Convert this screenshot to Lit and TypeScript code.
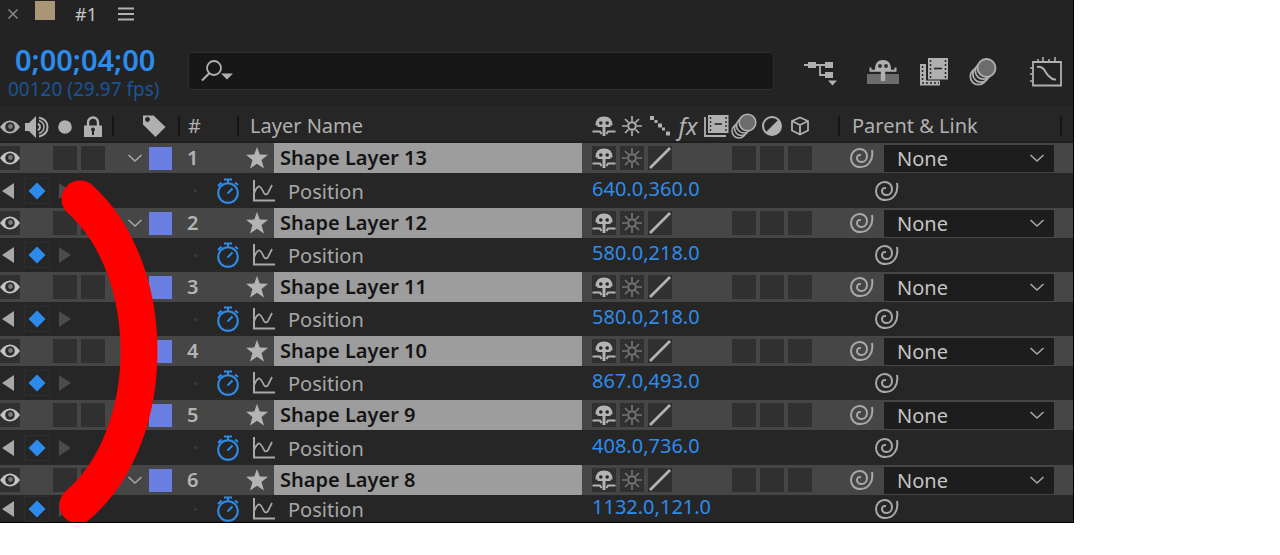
import { LitElement, html, svg, css } from "lit";
import { customElement, property } from "lit/decorators.js";

interface Layer {
  index: number;
  name: string;
  x: string;
  y: string;
}

const LAYERS: Layer[] = [
  { index: 1, name: "Shape Layer 13", x: "640.0", y: "360.0" },
  { index: 2, name: "Shape Layer 12", x: "580.0", y: "218.0" },
  { index: 3, name: "Shape Layer 11", x: "580.0", y: "218.0" },
  { index: 4, name: "Shape Layer 10", x: "867.0", y: "493.0" },
  { index: 5, name: "Shape Layer 9", x: "408.0", y: "736.0" },
  { index: 6, name: "Shape Layer 8", x: "1132.0", y: "121.0" },
];

const icon = (w: number, h: number, body: unknown) =>
  html`<svg width=${w} height=${h} viewBox="0 0 ${w} ${h}" fill="none" stroke="currentColor" aria-hidden="true">${body}</svg>`;

const eye = () => icon(20, 16, svg`
  <path d="M0 8Q4.500 1.500 10 1.500T20 8Q15.500 14.500 10 14.500T0 8Z" fill="currentColor" stroke="none"/>
  <circle cx="10" cy="8" r="4.800" fill="#2c2c2c" stroke="none"/>
  <circle cx="10.500" cy="7.500" r="2.400" fill="#7a7a7a" stroke="none"/>`);
const speaker = () => icon(24, 22, svg`
  <path d="M0 7h4L11 0v22L4 15H0Z" fill="currentColor" stroke="none"/>
  <path d="M13 7.500q4 3.500 0 7M14 1.500q8.500 2 8.500 9.500T14 20.500" stroke-width="2"/>
  <path d="M14 4.500q5 2 5 6.500t-5 6.500" stroke-width="1.500"/>`);
const dot = () => icon(14, 14, svg`<circle cx="7" cy="7" r="6.800" fill="currentColor" stroke="none"/>`);
const lock = () => icon(20, 22, svg`
  <path d="M5 10V6.500a5 5 0 0 1 10 0V10" stroke-width="2.400"/>
  <path d="M1 9.500h18V21H1Z" fill="currentColor" stroke="none"/>
  <circle cx="10" cy="13.500" r="2" fill="#262626" stroke="none"/><path d="M10 14v5" stroke="#262626" stroke-width="2"/>`);
const tag = () => icon(24, 24, svg`
  <path d="M1 1.500H11.500L23.500 13 13.500 23 1 10.500Z" fill="currentColor" stroke="none"/>
  <circle cx="5.500" cy="5.500" r="2.400" fill="#262626" stroke="none"/>`);
const star = () => icon(22, 22, svg`
  <path d="M11 0l2.800 7.600 8.200.2-6.500 5.200 2.500 8.500L11 16.800 4 21.500l2.500-8.500L0 7.800l8.200-.2Z" fill="currentColor" stroke="none"/>`);
const shy = () => icon(24, 20, svg`
  <path d="M3.500 9.500Q3.500 .5 12 .5t8.500 9H18.500V11H5.500V9.500Z" fill="currentColor" stroke="none"/>
  <path d="M.5 15.500H8L9.500 18M23.500 15.500H16L14.500 18" stroke-width="2"/>
  <path d="M10.500 9h3v11h-3Z" fill="currentColor" stroke="none"/>
  <circle cx="8.800" cy="7" r="1.800" fill="#262626" stroke="none"/><circle cx="15.200" cy="7" r="1.800" fill="#262626" stroke="none"/>`);
const sun = () => icon(20, 20, svg`
  <circle cx="10" cy="10" r="3.800" stroke-width="2"/>
  <path d="M10 0v5M10 15v5M0 10h5M15 10h5M3 3l3.500 3.500M13.500 13.500L17 17M17 3l-3.500 3.500M6.500 13.500L3 17" stroke-width="1.700"/>`);
const dots = () => icon(22, 22, svg`
  <path d="M1 1h4v4H1ZM5.500 5h3v3h-3ZM9 8.500h4v4H9ZM13 12.500h3v3h-3ZM17 16.500h4v4h-4Z" fill="currentColor" stroke="none"/>`);
const slash = () => icon(22, 22, svg`<path d="M1 21L21 1" stroke-width="2.600"/>`);
const film = () => icon(26, 24, svg`
  <path d="M2 3v19h21" stroke-width="1.800"/>
  <path d="M5 1h20.500v18H5Z" fill="currentColor" stroke="none"/>
  <path d="M7.500 3v14M23 3v14" stroke="#303030" stroke-width="1.500" stroke-dasharray="2 2"/>
  <path d="M11.500 10h7.500" stroke="#262626" stroke-width="1.600"/>`);
const blur = () => icon(26, 26, svg`
  <circle cx="8" cy="18" r="7" fill="#262626" stroke-width="1.600"/>
  <circle cx="10.500" cy="15.500" r="7" fill="#262626" stroke-width="1.600"/>
  <circle cx="13" cy="12.500" r="7.500" fill="#262626" stroke-width="1.600"/>
  <circle cx="16.500" cy="9.500" r="8.300" fill="#6c6c6c" stroke-width="1.600"/>`);
const half = () => icon(20, 20, svg`
  <circle cx="10" cy="10" r="9" stroke-width="2"/>
  <path d="M16.500 3.500A9.200 9.200 0 0 1 3.500 16.500Z" fill="currentColor" stroke="none"/>`);
const cube = () => icon(20, 20, svg`
  <path d="M10 1.500l8 3.500v9.500l-8 4-8-4V5ZM2 5l8 4 8-4M10 9v9" stroke-width="1.800"/>`);
const chevron = () => icon(16, 10, svg`<path d="M1.500 2L8 8l6.500-6" stroke-width="1.600"/>`);
const spiral = () => icon(24, 22, svg`
  <path d="M22 3C23.800 13 18 20 10.500 20 4.500 20 1 16 1 11.300 1 5.500 5 2 9.700 2c4.300 0 7.300 3 7.300 7 0 3.800-2.500 6-5.500 6C8.500 15 7 13 7 11c0-2 1.500-3.500 4-3" stroke-width="2"/>`);
const left = () => icon(12, 16, svg`<path d="M12 0v16L0 8Z" fill="currentColor" stroke="none"/>`);
const right = () => icon(12, 16, svg`<path d="M0 0v16L12 8Z" fill="currentColor" stroke="none"/>`);
const diamond = () => icon(18, 18, svg`<path d="M9 .5L17.500 9 9 17.500.5 9Z" fill="currentColor" stroke="none"/>`);
const stopwatch = () => icon(24, 26, svg`
  <circle cx="12" cy="15" r="9.800" stroke-width="2"/>
  <path d="M8 1.500h8M12 1.500v4M11.500 15.500l5-5M2 8l3.500-3.500M19 4.500L22 7" stroke-width="2"/>`);
const graph = () => icon(24, 24, svg`
  <path d="M2 1v20.500h21" stroke-width="2"/>
  <path d="M2 14.500Q5 7 7.500 7.500 9 8 12 14q2 3 4 0L20 6" stroke-width="1.700"/>`);
const close = () => icon(12, 12, svg`<path d="M1.500 1.500l9 9M10.500 1.500l-9 9" stroke-width="1.600"/>`);
const menu = () => icon(16, 16, svg`<path d="M0 2.500h16M0 8h16M0 13.500h16" stroke-width="1.800"/>`);
const magnifier = () => icon(32, 24, svg`
  <circle cx="13" cy="9" r="7" stroke-width="1.800"/><path d="M8.500 14L1 21.500" stroke-width="2.200"/>
  <path d="M20 14.500h12l-6 6Z" fill="currentColor" stroke="none"/>`);
const flowchart = () => icon(34, 28, svg`
  <path d="M0 7h29M16 7v10h8" stroke-width="1.800"/>
  <path d="M4 4h8v6H4ZM21 4h8v6h-8ZM21 14h8v6h-8ZM24 22.500h9l-4.500 5Z" fill="currentColor" stroke="none"/>`);
const shyLarge = () => icon(32, 26, svg`
  <path d="M0 15h32v10H0Z" fill="#6c6c6c" stroke="none"/>
  <path d="M8 10Q8 1 16 1t8 9v2H8Z" fill="currentColor" stroke="none"/>
  <path d="M3.500 8.500v3.200h25V8.500" stroke-width="2"/>
  <circle cx="13" cy="7" r="2" fill="#333" stroke="none"/><circle cx="19" cy="7" r="2" fill="#333" stroke="none"/>
  <path d="M13.800 11h4.400v11h-4.400Z" fill="currentColor" stroke="none"/>`);
const filmLarge = () => icon(28, 28, svg`
  <path d="M0 6h6v16.500h14v5H0Z" fill="currentColor" stroke="none"/>
  <path d="M2.500 8v16M2 25h17" stroke="#262626" stroke-width="1.500" stroke-dasharray="2 2"/>
  <path d="M8 0h20v21.500H8Z" fill="currentColor" stroke="none"/>
  <path d="M10.500 2v18M25.500 2v18" stroke="#262626" stroke-width="1.500" stroke-dasharray="2 2"/>
  <path d="M14 10.500h8" stroke="#262626" stroke-width="1.600"/>`);
const blurLarge = () => icon(28, 28, svg`
  <circle cx="9.500" cy="18.500" r="8.200" fill="#262626" stroke-width="1.800"/>
  <circle cx="12" cy="16" r="8.200" fill="#262626" stroke-width="1.800"/>
  <circle cx="14.500" cy="13" r="8.200" fill="#262626" stroke-width="1.800"/>
  <circle cx="17.500" cy="10" r="9" fill="#6c6c6c" stroke-width="1.800"/>`);
const graphEditor = () => icon(32, 30, svg`
  <path d="M3 5h28v23.500H3Z" stroke-width="1.800"/>
  <path d="M8 5V2M13 5V0M19 5V2M25 5V0M3 11H0M3 17H0M3 24H0" stroke-width="1.600"/>
  <path d="M7 10Q12 9 15 14t5 6q2.500 3 6 2.500" stroke-width="2"/>`);

const shared = css`
  * { box-sizing: border-box; }
  svg { display: block; flex: none; }
  button {
    display: inline-flex; align-items: center; justify-content: center;
    margin: 0; padding: 0; border: 0; background: none; color: inherit; font: inherit;
  }
  .columns {
    display: grid;
    grid-template-columns: 112px 66px 59px minmax(0, 1fr) 256px 235px;
  }
  .features { display: grid; grid-template-columns: 21px 24px 24px 24px; column-gap: 4px; align-items: center; justify-items: center; }
  .features > :first-child { justify-self: start; }
  .switches { display: grid; grid-template-columns: repeat(8, 24px); column-gap: 4px; padding-left: 10px; align-items: center; justify-items: center; }
`;

@customElement("layer-group")
class LayerGroup extends LitElement {
  @property({ attribute: false }) layer!: Layer;

  static styles = [shared, css`
    :host { display: grid; grid-template-rows: 30px 1fr; }
    .layer { background: #464646; align-items: center; }
    .layer .features, .layer .switches { height: 24px; }
    .cell { width: 24px; height: 24px; background: #303030; color: #b4b4b4; }
    .visible { width: 20px; color: #c4c4c4; }
    .dim { color: #747474; }
    .label { display: flex; align-items: center; justify-content: flex-end; gap: 6px; padding-right: 6px; color: #a8a8a8; }
    .swatch { width: 23px; height: 23px; background: #6b7fe2; }
    .index { padding-left: 9px; font-weight: 600; color: #b4b4b4; }
    .name { display: flex; align-items: center; align-self: stretch; gap: 6px; padding-left: 9px; color: #b4b4b4; }
    .name-box { flex: 1; align-self: stretch; padding-left: 6px; background: #9d9d9d; color: #141414; font-weight: 600; line-height: 30px; white-space: nowrap; overflow: hidden; }
    .parent { display: flex; align-items: center; gap: 10px; padding: 0 19px 0 12px; color: #a8a8a8; }
    .picker { flex: 1; display: grid; align-items: center; background: #1d1d1d; }
    .picker > * { grid-area: 1 / 1; }
    .picker svg { justify-self: end; margin-right: 9px; pointer-events: none; }
    select { appearance: none; width: 100%; height: 27px; margin: 0; padding: 0 13px; border: 0; border-radius: 0; background: none; color: #c4c4c4; font: inherit; }
    .property { align-items: center; background: #262626; color: #a8a8a8; }
    .previous { padding-left: 2px; }
    .key { width: 24px; height: 24px; outline: 1px solid #2e2e2e; color: #2d8ceb; }
    .faded { color: #4b4b4b; }
    .title { grid-column: 3 / span 2; display: flex; align-items: center; gap: 12px; padding-left: 16px; }
    .dot { width: 3px; height: 3px; border-radius: 50%; background: #3c3c3c; }
    .watch { margin-left: 7px; color: #2d8ceb; }
    .title-text { padding-top: 2px; line-height: 24px; }
    .value { display: flex; padding: 0 0 4px 10px; line-height: 24px; color: #2d8ceb; white-space: nowrap; }
    .link { display: flex; padding-left: 37px; }
  `];

  render() {
    const l = this.layer;
    return html`
      <div class="columns layer" role="row">
        <div class="features">
          <button class="cell visible" aria-label="Toggle visibility">${eye()}</button>
          <span></span>
          <button class="cell" aria-label="Solo"></button>
          <button class="cell" aria-label="Lock"></button>
        </div>
        <div class="label">
          <button aria-label="Collapse layer">${chevron()}</button>
          <button class="swatch" aria-label="Label colour"></button>
        </div>
        <div class="index">${l.index}</div>
        <div class="name">${star()}<span class="name-box">${l.name}</span></div>
        <div class="switches">
          <button class="cell" aria-label="Shy">${shy()}</button>
          <button class="cell dim" aria-label="Collapse transformations">${sun()}</button>
          <button class="cell" aria-label="Quality">${slash()}</button>
          <span></span><span></span>
          <button class="cell" aria-label="Motion blur"></button>
          <button class="cell" aria-label="Adjustment layer"></button>
          <button class="cell" aria-label="3D layer"></button>
        </div>
        <div class="parent">
          <button aria-label="Parent pick whip">${spiral()}</button>
          <span class="picker">
            <select aria-label="Parent of ${l.name}"><option>None</option></select>
            ${chevron()}
          </span>
        </div>
      </div>
      <div class="columns property" role="row">
        <div class="features">
          <button class="previous" aria-label="Previous keyframe">${left()}</button>
          <button class="key" aria-label="Remove keyframe">${diamond()}</button>
          <button class="faded" aria-label="Next keyframe">${right()}</button>
        </div>
        <div class="title">
          <span class="dot"></span>
          <button class="watch" aria-label="Toggle animation">${stopwatch()}</button>
          <button aria-label="Include in graph editor">${graph()}</button>
          <span class="title-text">Position</span>
        </div>
        <div class="value"><button aria-label="Position X">${l.x}</button>,<button aria-label="Position Y">${l.y}</button></div>
        <div class="link"><button aria-label="Property pick whip">${spiral()}</button></div>
      </div>`;
  }
}

@customElement("app-root")
class AppRoot extends LitElement {
  static styles = [shared, css`
    :host { display: block; min-height: 100vh; background: #fff; font: 20px/28px "Noto Sans", "Open Sans", sans-serif; }
    .panel { position: relative; margin-right: 206px; background: #262626; border: solid #000; border-width: 0 1px 1px 0; color: #b0b0b0; overflow: hidden; }
    .tab { display: flex; align-items: center; height: 28px; padding-left: 7px; background: #232323; }
    .tab-swatch { width: 20px; height: 19px; margin: 0 20px 8px 16px; background: #a89676; }
    .tab-name { margin-right: 21px; font-size: 18px; color: #c4c4c4; }
    .dimmed { color: #858585; }
    .toolbar { display: flex; align-items: center; height: 78px; padding: 0 11px 0 8px; background: #232323; border-bottom: 1px solid #1e1e1e; }
    .time { width: 180px; padding-top: 12px; white-space: nowrap; }
    .timecode { display: block; padding-left: 7px; font-size: 29px; line-height: 32px; font-weight: 600; color: #2d8ceb; }
    .frames { display: block; font-size: 19px; line-height: 26px; color: #1b5493; }
    .search { flex: 1; display: flex; align-items: center; height: 38px; margin-top: 8px; padding-left: 12px; border: 1px solid #2e2e2e; border-radius: 4px; background: #171717; }
    .search input { flex: 1; min-width: 0; height: 100%; border: 0; outline: 0; background: none; color: #c4c4c4; font: inherit; }
    .tools { display: flex; align-items: center; gap: 21px; padding: 10px 0 0 30px; }
    .tools > :first-child { margin-right: 8px; }
    .tools > :last-child { margin-left: 12px; }
    .head { height: 37px; align-items: center; border-bottom: 2px solid #1f1f1f; padding-top: 5px; }
    .head > div { height: 20px; align-items: center; line-height: 20px; white-space: nowrap; }
    .head > div + div { border-left: 2px solid #151515; }
    .head .tag { display: flex; padding-left: 28px; }
    .hash { padding-left: 8px; }
    .layer-name { padding-left: 11px; }
    .head .switches { height: 26px; border-color: #262626; padding-left: 8px; }
    .fx { font: italic 24px/24px "Noto Sans", "Open Sans", sans-serif; }
    .head .parent-head { display: flex; justify-content: space-between; margin-right: 11px; padding-left: 12px; border-right: 2px solid #151515; }
    layer-group { height: 64px; }
    layer-group:nth-child(4n + 1) { height: 65px; }
    layer-group:last-child { height: 57px; }
    .stroke { position: absolute; left: 0; top: 0; pointer-events: none; }
  `];

  render() {
    return html`
      <main class="panel">
        <header class="tab">
          <button class="dimmed" aria-label="Close tab">${close()}</button>
          <span class="tab-swatch"></span>
          <span class="tab-name">#1</span>
          <button aria-label="Panel menu">${menu()}</button>
        </header>
        <section class="toolbar">
          <div class="time">
            <span class="timecode">0;00;04;00</span>
            <span class="frames">00120 (29.97 fps)</span>
          </div>
          <div class="search">
            <button aria-label="Search options">${magnifier()}</button>
            <input type="text" aria-label="Search layers" />
          </div>
          <div class="tools">
            <button aria-label="Mini-flowchart">${flowchart()}</button>
            <button aria-label="Hide shy layers">${shyLarge()}</button>
            <button aria-label="Frame blending">${filmLarge()}</button>
            <button aria-label="Motion blur">${blurLarge()}</button>
            <button aria-label="Graph editor">${graphEditor()}</button>
          </div>
        </section>
        <div class="columns head" role="row">
          <div class="features">${eye()}${speaker()}${dot()}${lock()}</div>
          <div class="tag">${tag()}</div>
          <div class="hash">#</div>
          <div class="layer-name">Layer Name</div>
          <div class="switches">
            ${shy()}${sun()}${dots()}<span class="fx">fx</span>${film()}${blur()}${half()}${cube()}
          </div>
          <div class="parent-head">Parent &amp; Link</div>
        </div>
        <div class="layers">
          ${LAYERS.map((l) => html`<layer-group .layer=${l}></layer-group>`)}
        </div>
        <svg class="stroke" width="170" height="524" viewBox="0 0 170 524" fill="none" aria-hidden="true">
          <path d="M80 199C159 270 159 435 78 505" stroke="#f00" stroke-width="37" stroke-linecap="round"/>
        </svg>
      </main>`;
  }
}
